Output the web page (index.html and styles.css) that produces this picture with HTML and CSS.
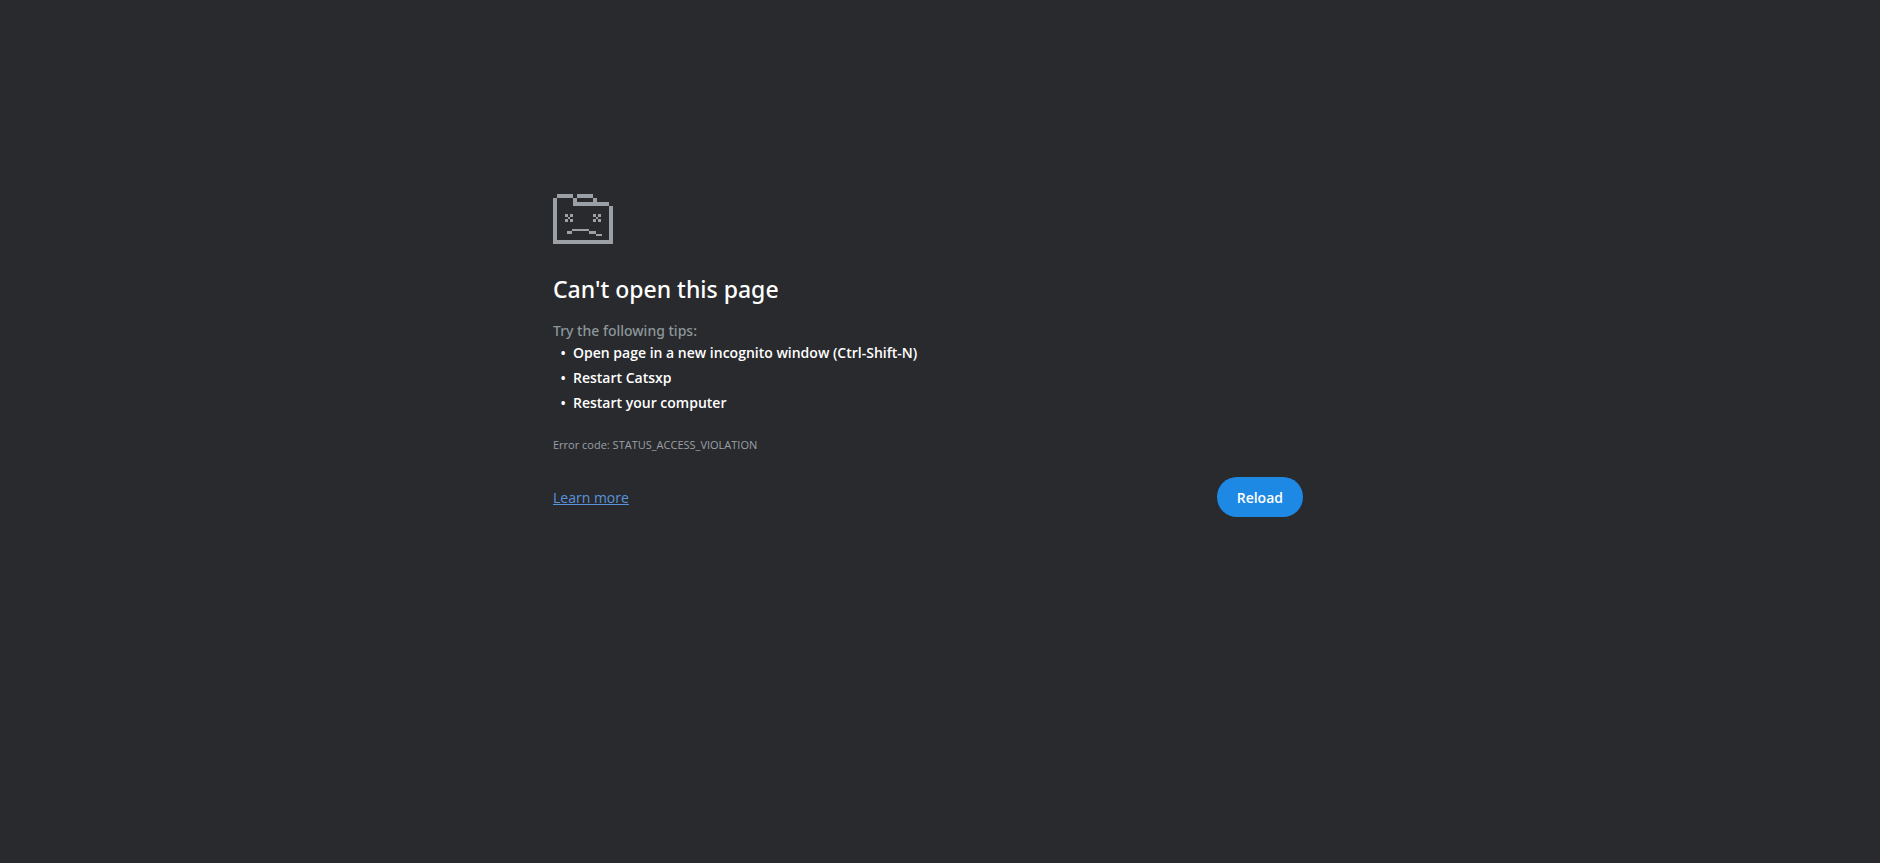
FILE: index.html
```html
<!DOCTYPE html>
<html lang="en">
<head>
    <meta charset="UTF-8">
    <meta name="viewport" content="width=device-width, initial-scale=1.0">
    <title>Can't open this page</title>
    <link rel="stylesheet" href="styles.css">
</head>
<body>
    <main class="error-page">
        <svg class="icon" viewBox="0 0 60 50" shape-rendering="crispEdges" aria-hidden="true">
            <!-- folder -->
            <path d="M4 0h16v4h-16zM24 0h16v4h-16zM0 4h4v42h52v-34h4v38h-60zM20 4h4v4h16v-4h4v4h12v4h-36z"/>
            <!-- eyes -->
            <path d="M12 20h3v3h-3zM17 20h3v3h-3zM15 23h2v2h-2zM12 25h3v3h-3zM17 25h3v3h-3z"/>
            <path d="M40 20h3v3h-3zM45 20h3v3h-3zM43 23h2v2h-2zM40 25h3v3h-3zM45 25h3v3h-3z"/>
            <!-- mouth -->
            <path d="M14 37h5v3h-5zM19 35h17v2h-17zM36 37h7v3h-7zM43 40h6v2h-6z"/>
        </svg>
        <h1>Can't open this page</h1>
        <p class="tips-title">Try the following tips:</p>
        <ul class="tips">
            <li>Open page in a new incognito window (Ctrl-Shift-N)</li>
            <li>Restart Catsxp</li>
            <li>Restart your computer</li>
        </ul>
        <p class="error-code">Error code: STATUS_ACCESS_VIOLATION</p>
        <div class="buttons">
            <a href="#">Learn more</a>
            <button type="button">Reload</button>
        </div>
    </main>
</body>
</html>
```
FILE: styles.css
```css
body {
    margin: 0;
    padding: 194px 24px 40px 0;
    background-color: #292a2d;
    color: #fff;
    font-family: "Open Sans", "Noto Sans", sans-serif;
    font-size: 14px;
    line-height: 25px;
}

.error-page {
    max-width: 750px;
    margin: 0 auto;
}

.icon {
    display: block;
    width: 60px;
    height: 50px;
    fill: #9aa0a6;
}

h1 {
    margin: 30px 0 18px;
    font-family: "Noto Sans", sans-serif;
    font-size: 23px;
    font-weight: 500;
    line-height: 30px;
}

.tips-title {
    margin: 0;
    color: #8b979b;
    font-family: "Noto Sans", sans-serif;
    font-weight: 500;
    line-height: 18px;
}

.tips {
    margin: 0;
    padding-left: 20px;
    font-weight: 600;
    list-style-type: "•\00a0\00a0";
}

.error-code {
    margin: 20px 0 22px;
    color: #9aa0a6;
    font-size: 11px;
    line-height: 20px;
}

.buttons {
    display: flex;
    align-items: center;
    justify-content: space-between;
}

.buttons a {
    color: #5a93dd;
}

.buttons button {
    height: 40px;
    padding: 0 20px;
    border: none;
    border-radius: 20px;
    background-color: #1e88e5;
    color: #fff;
    font-family: inherit;
    font-size: 14px;
    font-weight: 600;
    cursor: pointer;
}
```
